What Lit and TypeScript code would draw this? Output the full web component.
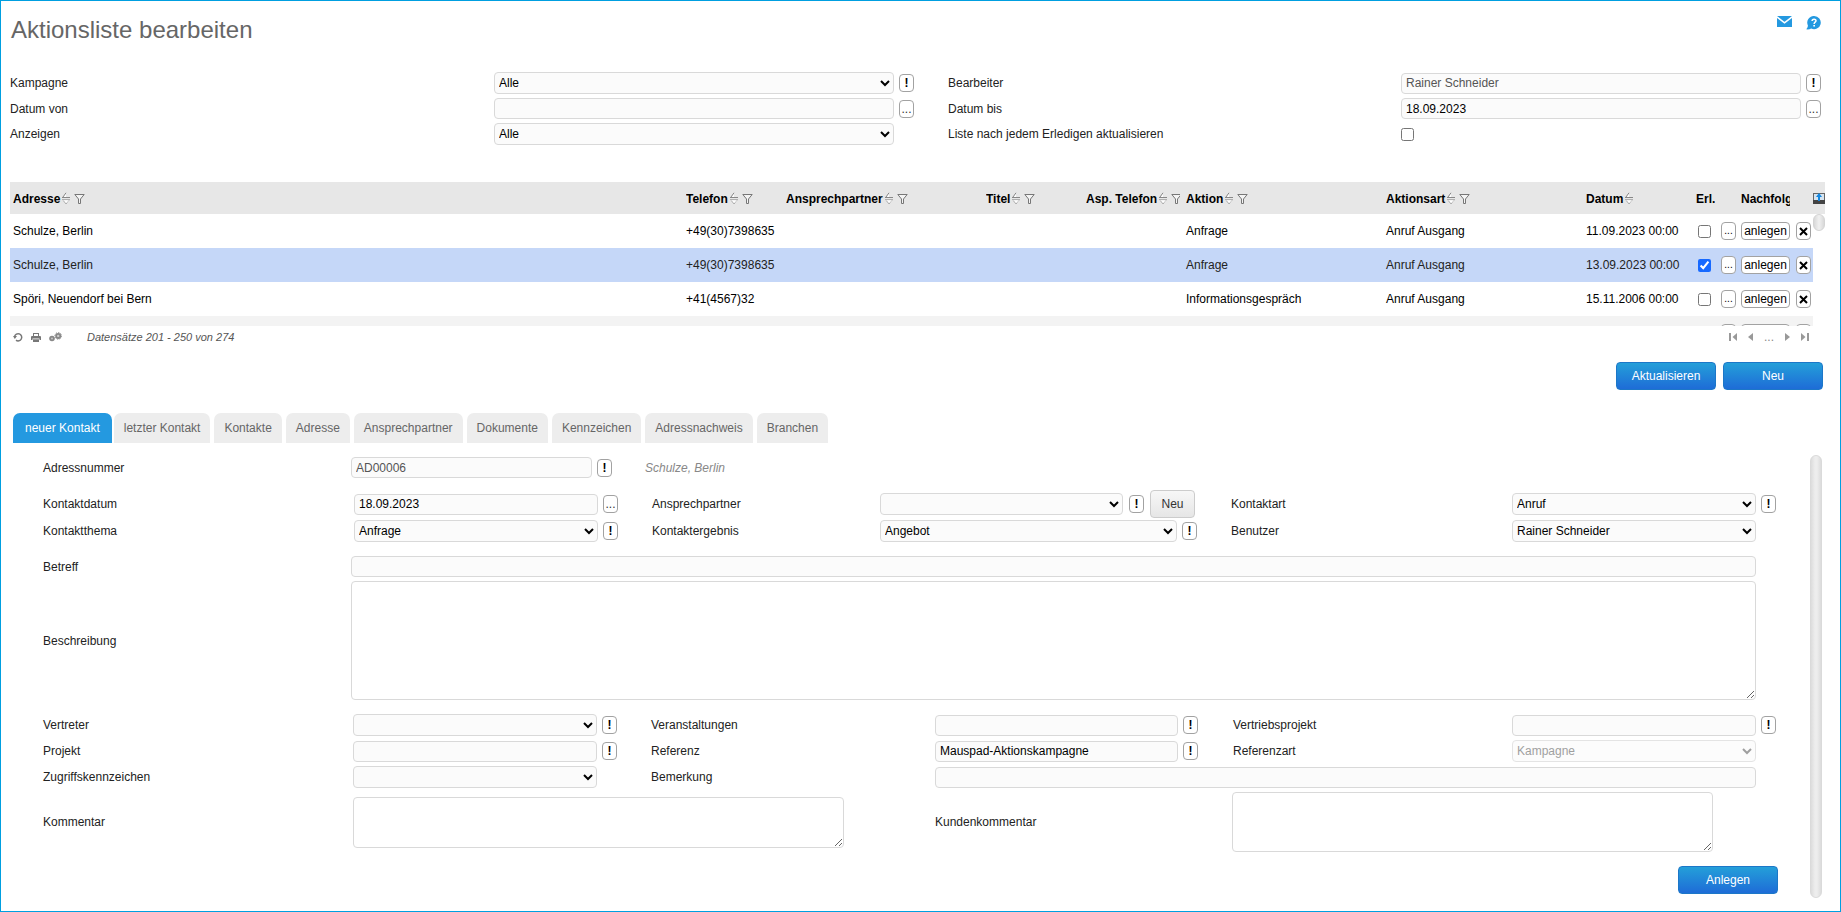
import { LitElement, html, svg, css, nothing } from "lit";
import { customElement, state } from "lit/decorators.js";
import { classMap } from "lit/directives/class-map.js";

interface Column {
  title: string;
  size: string;
  sort?: boolean;
  filter?: boolean;
}

interface Action {
  address: string;
  phone: string;
  action: string;
  kind: string;
  date: string;
  done: boolean;
  tone: "" | "selected" | "striped";
}

const COLUMNS: Column[] = [
  { title: "Adresse", size: "c-auto", sort: true, filter: true },
  { title: "Telefon", size: "c-100", sort: true, filter: true },
  { title: "Ansprechpartner", size: "c-200", sort: true, filter: true },
  { title: "Titel", size: "c-100", sort: true, filter: true },
  { title: "Asp. Telefon", size: "c-100", sort: true, filter: true },
  { title: "Aktion", size: "c-200", sort: true, filter: true },
  { title: "Aktionsart", size: "c-200", sort: true, filter: true },
  { title: "Datum", size: "c-110", sort: true },
  { title: "Erl.", size: "c-25" },
  { title: "", size: "c-20" },
  { title: "Nachfolger", size: "c-55" },
  { title: "", size: "c-20" },
];

const ACTIONS: Action[] = [
  { address: "Schulze, Berlin", phone: "+49(30)7398635", action: "Anfrage", kind: "Anruf Ausgang", date: "11.09.2023 00:00", done: false, tone: "" },
  { address: "Schulze, Berlin", phone: "+49(30)7398635", action: "Anfrage", kind: "Anruf Ausgang", date: "13.09.2023 00:00", done: true, tone: "selected" },
  { address: "Spöri, Neuendorf bei Bern", phone: "+41(4567)32", action: "Informationsgespräch", kind: "Anruf Ausgang", date: "15.11.2006 00:00", done: false, tone: "" },
  { address: "", phone: "", action: "", kind: "", date: "", done: false, tone: "striped" },
];

const TABS = ["neuer Kontakt", "letzter Kontakt", "Kontakte", "Adresse", "Ansprechpartner", "Dokumente", "Kennzeichen", "Adressnachweis", "Branchen"];

const icon = (w: number, h: number, body: unknown, cls = "") => html`
  <svg class=${cls} width=${w} height=${h} viewBox="0 0 ${w} ${h}" aria-hidden="true">${body}</svg>`;

const icons = {
  mail: icon(15, 11, svg`<path fill="#2499e0" d="M0 0h15v11H0z"/><path fill="none" stroke="#fff" stroke-width="1.6" d="M-.5 .6 7.5 6.8 15.5 .6"/>`),
  help: icon(15, 14, svg`<path fill="#2499e0" d="M8.2 0a6.6 6.6 0 1 1-3 12.5C3.800 13.300 2 13.600.1 13.300 1.300 12.300 1.900 11 1.900 9.500A6.600 6.600 0 0 1 8.200 0z"/><path fill="none" stroke="#fff" stroke-width="1.500" d="M6.100 5.100c0-2.400 3.900-2.400 3.900-.3 0 1.300-1.900 1.500-1.900 3.100"/><path fill="#fff" d="M7.300 8.900h1.700v1.600H7.300z"/>`),
  sort: icon(8, 13, svg`<path fill="#fff" d="M4 1v4H2zM2 8.500h4l-2 3z"/><path fill="none" stroke="#888" d="M1 5 4 .800M0 5.500h8"/><path fill="none" stroke="#b0b0b0" d="M0 7.500h8M1.200 8.500 4 12"/><path fill="none" stroke="#999" stroke-dasharray="1 1" d="M4 12 7 8.500"/>`, "sort"),
  filter: icon(11, 10, svg`<path fill="#f4f4f4" stroke="#777" d="M.8 .5h9.400L6.500 5v4.500h-2V5z"/>`, "funnel"),
  columns: icon(12, 11, svg`<path fill="#666" d="M0 0h12v1H0zM0 0h1v8H0zM11 0h1v8h-1z"/><path fill="#d6e4f0" d="M1 1h10v6H1z"/><path fill="#1487e0" d="M6 0 9 4H7v4H5V4H3z"/><path fill="#444" d="M0 7h12v4H0z"/><path fill="#1487e0" d="M5 6h2v2H5z"/>`),
  cross: icon(9, 9, svg`<path stroke="#000" stroke-width="2" d="m1 1 7 7M8 1 1 8"/>`),
  reload: icon(10, 10, svg`<path fill="none" stroke="#777" stroke-width="1.500" d="M1.600 4.500A3.600 3.600 0 1 1 3 8.200"/><path fill="#777" d="M0 4h4L1.800 7z"/>`),
  print: icon(10, 9, svg`<path fill="#777" d="M2 0h6v3h1a1 1 0 0 1 1 1v3H8.500V5.500h-7V7H0V4a1 1 0 0 1 1-1h1z"/><path fill="#fff" d="M3 1h4v2H3z"/><path fill="#777" d="M2 6.300h6V9H2z"/>`),
  gears: icon(13, 10, svg`<circle cx="3" cy="6.500" r="2.800" fill="#888"/><circle cx="3" cy="6.500" r=".9" fill="#ccc"/><circle cx="9.200" cy="3.900" r="3" fill="#888"/><circle cx="9.200" cy="3.900" r="3.300" fill="none" stroke="#888" stroke-dasharray="1.400 1.100"/><circle cx="9.200" cy="3.900" r="1.200" fill="#ccc"/>`),
  first: icon(8, 8, svg`<path fill="#999" d="M0 0h2v8H0zM8 0v8L3.500 4z"/>`),
  prev: icon(5, 8, svg`<path fill="#999" d="M5 0v8L0 4z"/>`),
  next: icon(5, 8, svg`<path fill="#999" d="M0 0v8l5-4z"/>`),
  last: icon(8, 8, svg`<path fill="#999" d="M6 0h2v8H6zM0 0v8l4.500-4z"/>`),
};

const label = (id: string, text: string) => html`<label for=${id}>${text}</label>`;
const lookup = (what: string) => html`<button class="mini strong" type="button" aria-label="${what} auswählen">!</button>`;
const dots = (what: string) => html`<button class="mini" type="button" aria-label="${what} im Kalender wählen">...</button>`;
const input = (id: string, value = "", readonly = false) => html`
  <input class="box" type="text" id=${id} .value=${value} ?readonly=${readonly} />`;
const select = (id: string, value = "", disabled = false) => html`
  <select class="box" id=${id} ?disabled=${disabled}><option>${value}</option></select>`;

@customElement("action-table")
export class ActionTable extends LitElement {
  @state() private rows = ACTIONS;

  static styles = css`
    :host { display: block; }
    * { box-sizing: border-box; }
    .frame { display: flex; height: 144px; overflow: hidden; }
    .rail { width: 12px; }
    .corner { display: flex; align-items: center; height: 32px; background: #e7e7e7; }
    .thumb { height: 17px; border-radius: 6px; border: 1px solid #d4d4d4; background: linear-gradient(90deg, #d8d8d8, #f0f0f0 50%, #d8d8d8); }
    table { flex: 1; width: 0; table-layout: fixed; border-collapse: collapse; }
    th, td { padding: 0 3px; overflow: hidden; white-space: nowrap; text-align: left; }
    th { height: 32px; padding-top: 2px; background: #e7e7e7; color: #000; font-weight: bold; }
    td { height: 34px; color: #000; }
    .selected td { background: #c5d7f8; color: #222; }
    .striped td { background: #f3f3f3; }
    .c-100 { width: 100px; }
    .c-200 { width: 200px; }
    .c-110 { width: 110px; }
    .c-25 { width: 25px; }
    .c-20 { width: 20px; }
    .c-55 { width: 55px; }
    .head { display: flex; align-items: center; overflow: hidden; }
    .head svg { flex: none; }
    .sort { margin: 0 0 2px 2px; }
    .funnel { margin: 0 0 1px 4px; }
    .tick { display: block; width: 13px; height: 13px; margin: 0 2px; accent-color: #1769ff; }
    .mini { display: flex; align-items: center; justify-content: center; width: 15px; height: 18px; padding: 0; border: 1px solid #a2a2a2; border-radius: 4px; background: #fff; color: #000; font: inherit; font-size: 10px; }
    .wide { width: 49px; font-size: 12px; }
    .mini svg { flex: none; }
  `;

  private toggle(index: number) {
    this.rows = this.rows.map((r, i) => (i === index ? { ...r, done: !r.done } : r));
  }

  render() {
    return html`
      <div class="frame">
        <table>
          <thead>
            <tr>${COLUMNS.map((c) => html`
              <th class=${c.size} scope="col"><div class="head">${c.title}${c.sort ? icons.sort : nothing}${c.filter ? icons.filter : nothing}</div></th>`)}
            </tr>
          </thead>
          <tbody>
            ${this.rows.map((r, i) => html`
              <tr class=${r.tone}>
                <td>${r.address}</td>
                <td>${r.phone}</td>
                <td></td><td></td><td></td>
                <td>${r.action}</td>
                <td>${r.kind}</td>
                <td>${r.date}</td>
                <td><input class="tick" type="checkbox" aria-label="Erledigt" .checked=${r.done} @change=${() => this.toggle(i)} /></td>
                <td><button class="mini" type="button" aria-label="Details">${r.address ? "..." : nothing}</button></td>
                <td><button class="mini wide" type="button" aria-label="Nachfolger anlegen">${r.address ? "anlegen" : nothing}</button></td>
                <td><button class="mini" type="button" aria-label="Löschen">${icons.cross}</button></td>
              </tr>`)}
          </tbody>
        </table>
        <div class="rail">
          <div class="corner">${icons.columns}</div>
          <div class="thumb"></div>
        </div>
      </div>`;
  }
}

@customElement("app-root")
export class AppRoot extends LitElement {
  @state() private tab = 0;

  static styles = css`
    :host {
      display: block;
      box-sizing: border-box;
      min-height: 100vh;
      padding: 15px 15px 13px 9px;
      border: 1px solid #009fe0;
      background: #fff;
      color: #222;
      font: 12px/14px "Liberation Sans", Arial, sans-serif;
    }
    * { box-sizing: border-box; }
    svg { display: block; }

    .top { display: flex; justify-content: space-between; align-items: flex-start; height: 56px; padding: 0 4px 0 1px; }
    h1 { margin: 0; color: #666; font-size: 24px; line-height: 28px; font-weight: normal; }
    .links { display: flex; gap: 14px; }

    .grid { display: grid; align-items: center; row-gap: 4px; }
    .filters { grid-template-columns: 484fr 420fr 34px 453fr 420fr; padding-right: 4px; }
    .contact { grid-template-columns: 311fr 264fr 34px 228fr 317fr 34px 281fr 264fr; row-gap: 2px; }
    .number { grid-template-columns: 308fr 261fr 33px 1131fr; }
    .text { grid-template-columns: 308fr 1425fr; }
    .links-grid { grid-template-columns: 310fr 264fr 34px 284fr 263fr 35px 279fr 264fr; }
    .notes { grid-template-columns: 310fr 491fr 91fr 297fr 481fr 63fr; }
    .grid > * { min-width: 0; }
    .second { grid-column: 4; }
    .third { grid-column: 7; }
    .to-end { grid-column: 5 / -1; }

    .field { display: flex; align-items: center; gap: 5px; }
    .open { padding-right: 20px; }
    .with-new { gap: 6px; padding-right: 2px; }

    .box { flex: 1; min-width: 0; width: 100%; height: 21px; margin: 0; padding: 0 4px; border: 1px solid #d9d9d9; border-radius: 4px; background-color: #fbfbfb; color: #000; font: inherit; }
    select.box { height: 22px; padding: 0; }
    select.box:disabled { color: #777; }
    .box:read-only:not(select) { color: #555; }
    textarea { display: block; width: 100%; margin: 0; border: 1px solid #d9d9d9; border-radius: 4px; background: #fff; font: inherit; resize: both; }
    .tall { height: 119px; }
    .small { height: 51px; }
    .medium { height: 60px; }
    .tick { display: block; width: 13px; height: 13px; margin: 0; }

    .mini { flex: none; width: 15px; height: 18px; padding: 0; border: 1px solid #a2a2a2; border-radius: 4px; background: #fff; color: #333; font: inherit; }
    .strong { color: #000; font-weight: bold; }

    action-table { margin-top: 37px; }

    .foot { display: flex; align-items: center; height: 22px; padding: 0 16px 0 3px; }
    .icon { display: block; padding: 0; border: 0; background: none; color: #888; font: inherit; }
    .tools { display: flex; align-items: center; gap: 8px; margin-right: 25px; }
    .count { flex: 1; color: #555; font-size: 11px; font-style: italic; }
    .pager { display: flex; align-items: center; gap: 11px; }

    .actions { display: flex; justify-content: flex-end; gap: 7px; padding: 14px 2px 0 0; }
    .primary { width: 100px; height: 28px; padding: 0; border: 1px solid #1c77c8; border-radius: 4px; background: linear-gradient(#249fd9, #1e6cd7); color: #fff; font: inherit; }
    .plain { flex: none; width: 45px; height: 28px; padding: 0; border: 1px solid #ccc; border-radius: 4px; background: linear-gradient(#f7f7f7, #e6e6e6); color: #333; font: inherit; }

    .tabs { display: flex; gap: 4px; margin-top: 23px; padding-left: 3px; }
    .tab { height: 30px; padding: 0 10px; border: 0; border-radius: 7px 7px 0 0; background: #ededed; color: #666; font: inherit; white-space: nowrap; }
    .tab.active { margin-right: -2px; padding: 0 12px; background: #2499e0; color: #fff; }

    .panel { display: flex; gap: 34px; margin-top: 12px; padding: 0 3px 0 33px; }
    .form { flex: 1; min-width: 0; display: flex; flex-direction: column; padding: 2px 0 4px; }
    .contact { margin-top: 12px; }
    .text, .links-grid { margin-top: 14px; }
    .notes { margin-top: 4px; }
    .hint { grid-column: 4; color: #888; font-style: italic; }
    .form .actions { margin-right: -2px; padding-right: 0; }
    .bar { width: 12px; border: 1px solid #dadada; border-radius: 6px; background: linear-gradient(90deg, #dcdcdc, #ededed 40%, #ededed 60%, #dcdcdc); }
  `;

  render() {
    return html`
      <header class="top">
        <h1>Aktionsliste bearbeiten</h1>
        <nav class="links">
          <a href="#mail" aria-label="Nachricht">${icons.mail}</a>
          <a href="#hilfe" aria-label="Hilfe">${icons.help}</a>
        </nav>
      </header>

      <section class="grid filters">
        ${label("kampagne", "Kampagne")}
        <div class="field">${select("kampagne", "Alle")}${lookup("Kampagne")}</div>
        <div class="second">${label("bearbeiter", "Bearbeiter")}</div>
        <div class="field">${input("bearbeiter", "Rainer Schneider", true)}${lookup("Bearbeiter")}</div>
        ${label("von", "Datum von")}
        <div class="field">${input("von")}${dots("Datum von")}</div>
        <div class="second">${label("bis", "Datum bis")}</div>
        <div class="field">${input("bis", "18.09.2023")}${dots("Datum bis")}</div>
        ${label("anzeigen", "Anzeigen")}
        <div class="field open">${select("anzeigen", "Alle")}</div>
        <div class="second">${label("liste", "Liste nach jedem Erledigen aktualisieren")}</div>
        <div class="field"><input class="tick" type="checkbox" id="liste" /></div>
      </section>

      <action-table></action-table>

      <div class="foot">
        <div class="tools">
          <button class="icon" type="button" aria-label="Neu laden">${icons.reload}</button>
          <button class="icon" type="button" aria-label="Drucken">${icons.print}</button>
          <button class="icon" type="button" aria-label="Einstellungen">${icons.gears}</button>
        </div>
        <span class="count">Datensätze 201 - 250 von 274</span>
        <div class="pager">
          <button class="icon" type="button" aria-label="Erste Seite">${icons.first}</button>
          <button class="icon" type="button" aria-label="Vorige Seite">${icons.prev}</button>
          <button class="icon" type="button" aria-label="Seite wählen">...</button>
          <button class="icon" type="button" aria-label="Nächste Seite">${icons.next}</button>
          <button class="icon" type="button" aria-label="Letzte Seite">${icons.last}</button>
        </div>
      </div>

      <div class="actions">
        <button class="primary" type="button">Aktualisieren</button>
        <button class="primary" type="button">Neu</button>
      </div>

      <div class="tabs" role="tablist">
        ${TABS.map((t, i) => html`
          <button type="button" role="tab" aria-selected=${i === this.tab ? "true" : "false"}
            class=${classMap({ tab: true, active: i === this.tab })} @click=${() => (this.tab = i)}>${t}</button>`)}
      </div>

      <div class="panel">
        <form class="form">
          <div class="grid number">
            ${label("nummer", "Adressnummer")}
            <div class="field">${input("nummer", "AD00006", true)}${lookup("Adresse")}</div>
            <span class="hint">Schulze, Berlin</span>
          </div>

          <div class="grid contact">
            ${label("datum", "Kontaktdatum")}
            <div class="field">${input("datum", "18.09.2023")}${dots("Kontaktdatum")}</div>
            <div class="second">${label("partner", "Ansprechpartner")}</div>
            <div class="field with-new">${select("partner")}${lookup("Ansprechpartner")}<button class="plain" type="button">Neu</button></div>
            <div class="third">${label("art", "Kontaktart")}</div>
            <div class="field">${select("art", "Anruf")}${lookup("Kontaktart")}</div>
            ${label("thema", "Kontaktthema")}
            <div class="field">${select("thema", "Anfrage")}${lookup("Kontaktthema")}</div>
            <div class="second">${label("ergebnis", "Kontaktergebnis")}</div>
            <div class="field">${select("ergebnis", "Angebot")}${lookup("Kontaktergebnis")}</div>
            <div class="third">${label("benutzer", "Benutzer")}</div>
            <div class="field open">${select("benutzer", "Rainer Schneider")}</div>
          </div>

          <div class="grid text">
            ${label("betreff", "Betreff")}
            <div class="field open">${input("betreff")}</div>
            ${label("beschreibung", "Beschreibung")}
            <div class="open"><textarea class="tall" id="beschreibung"></textarea></div>
          </div>

          <div class="grid links-grid">
            ${label("vertreter", "Vertreter")}
            <div class="field">${select("vertreter")}${lookup("Vertreter")}</div>
            <div class="second">${label("veranstaltungen", "Veranstaltungen")}</div>
            <div class="field">${input("veranstaltungen")}${lookup("Veranstaltung")}</div>
            <div class="third">${label("vertrieb", "Vertriebsprojekt")}</div>
            <div class="field">${input("vertrieb")}${lookup("Vertriebsprojekt")}</div>
            ${label("projekt", "Projekt")}
            <div class="field">${input("projekt")}${lookup("Projekt")}</div>
            <div class="second">${label("referenz", "Referenz")}</div>
            <div class="field">${input("referenz", "Mauspad-Aktionskampagne")}${lookup("Referenz")}</div>
            <div class="third">${label("referenzart", "Referenzart")}</div>
            <div class="field open">${select("referenzart", "Kampagne", true)}</div>
            ${label("zugriff", "Zugriffskennzeichen")}
            <div class="field open">${select("zugriff")}</div>
            <div class="second">${label("bemerkung", "Bemerkung")}</div>
            <div class="field open to-end">${input("bemerkung")}</div>
          </div>

          <div class="grid notes">
            ${label("kommentar", "Kommentar")}
            <textarea class="small" id="kommentar"></textarea>
            <div class="second">${label("kundenkommentar", "Kundenkommentar")}</div>
            <textarea class="medium" id="kundenkommentar"></textarea>
          </div>

          <div class="actions">
            <button class="primary" type="button">Anlegen</button>
          </div>
        </form>
        <div class="bar"></div>
      </div>`;
  }
}
